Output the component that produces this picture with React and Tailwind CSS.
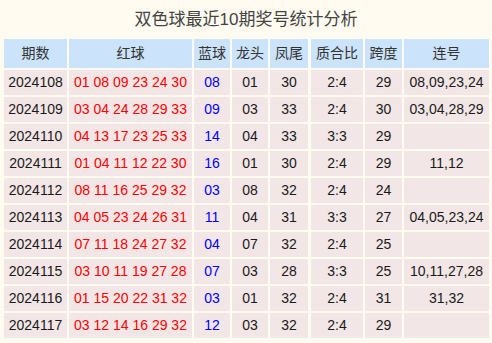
import React from "react";

const rows = [
  ["2024108", "01 08 09 23 24 30", "08", "01", "30", "2:4", "29", "08,09,23,24"],
  ["2024109", "03 04 24 28 29 33", "09", "03", "33", "2:4", "30", "03,04,28,29"],
  ["2024110", "04 13 17 23 25 33", "14", "04", "33", "3:3", "29", ""],
  ["2024111", "01 04 11 12 22 30", "16", "01", "30", "2:4", "29", "11,12"],
  ["2024112", "08 11 16 25 29 32", "03", "08", "32", "2:4", "24", ""],
  ["2024113", "04 05 23 24 26 31", "11", "04", "31", "3:3", "27", "04,05,23,24"],
  ["2024114", "07 11 18 24 27 32", "04", "07", "32", "2:4", "25", ""],
  ["2024115", "03 10 11 19 27 28", "07", "03", "28", "3:3", "25", "10,11,27,28"],
  ["2024116", "01 15 20 22 31 32", "03", "01", "32", "2:4", "31", "31,32"],
  ["2024117", "03 12 14 16 29 32", "12", "03", "32", "2:4", "29", ""],
];

const headers = ["期数", "红球", "蓝球", "龙头", "凤尾", "质合比", "跨度", "连号"];

export default function App() {
  return (
    <div
      className="w-[492px] h-[343px] bg-[#fffbf0] overflow-hidden"
      style={{ fontFamily: '"Liberation Sans", "Noto Sans CJK SC", sans-serif' }}
    >
      {/* title */}
      <div className="h-[39px] flex items-center justify-center text-[17px] text-[#444] pt-[1px]">
        双色球最近10期奖号统计分析
      </div>

      <div className="ml-[4px] w-[485px] grid grid-cols-[63px_123px_36px_36px_39px_52px_37px_85px] grid-rows-[29px_repeat(10,25px)] gap-[2px] text-[14px]">
        {headers.map((h, i) => (
          <div
            key={h}
            className={`bg-[#cce4fb] text-[#333] flex items-center justify-center ${i === 4 ? "mr-[1px]" : ""}`}
          >
            {h}
          </div>
        ))}
        {rows.map((r) =>
          r.map((v, i) => (
            <div
              key={r[0] + i}
              className={`bg-[#f2e6e6] flex items-center justify-center whitespace-pre ${
                i === 1 ? "text-[#ff0000]" : i === 2 ? "text-[#0000ff]" : "text-[#1a1a1a]"
              } ${i === 4 ? "mr-[1px]" : ""}`}
            >
              {v}
            </div>
          ))
        )}
      </div>
    </div>
  );
}
